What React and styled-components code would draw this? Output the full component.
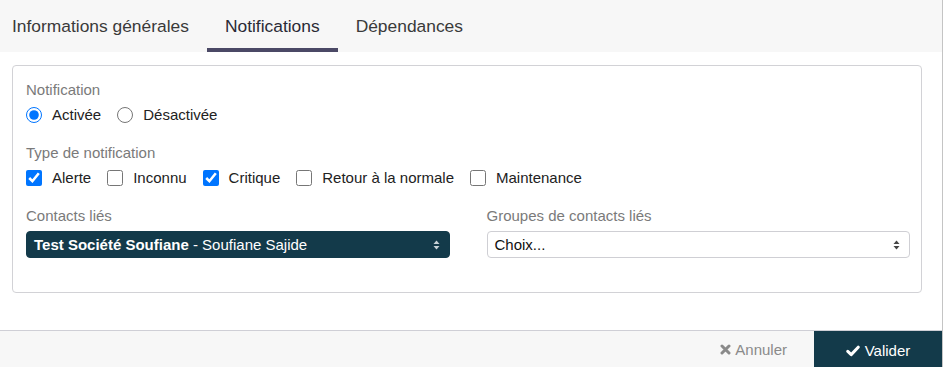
import React, { useState } from 'react';
import styled, { createGlobalStyle } from 'styled-components';

const GlobalStyle = createGlobalStyle`
  html, body {
    margin: 0;
    padding: 0;
    background: #ffffff;
  }
  body {
    font-family: "Liberation Sans", Arial, sans-serif;
    color: #222;
  }
  * {
    box-sizing: border-box;
  }
`;

const TYPES = [
  { key: 'alerte', label: 'Alerte' },
  { key: 'inconnu', label: 'Inconnu' },
  { key: 'critique', label: 'Critique' },
  { key: 'retour', label: 'Retour à la normale' },
  { key: 'maintenance', label: 'Maintenance' },
];

const SortArrows = ({ color }) => (
  <svg width="7" height="10" viewBox="0 0 7 10">
    <path d="M3.5 0.5 L6.5 4 L0.5 4 Z" fill={color} />
    <path d="M3.5 9.5 L6.5 6 L0.5 6 Z" fill={color} />
  </svg>
);

const App = () => {
  const [tab, setTab] = useState('notifications');
  const [active, setActive] = useState(true);
  const [types, setTypes] = useState({
    alerte: true,
    inconnu: false,
    critique: true,
    retour: false,
    maintenance: false,
  });

  const toggleType = (key) => {
    setTypes({ ...types, [key]: !types[key] });
  };

  return (
    <>
      <GlobalStyle />
      <Modal>
        <TabBar>
          <Tab active={tab === 'general'} onClick={() => setTab('general')}>
            Informations générales
          </Tab>
          <Tab active={tab === 'notifications'} onClick={() => setTab('notifications')}>
            Notifications
          </Tab>
          <Tab active={tab === 'deps'} onClick={() => setTab('deps')}>
            Dépendances
          </Tab>
        </TabBar>

        <Body>
          <Card>
            <Group>
              <GroupLabel>Notification</GroupLabel>
              <OptionRow>
                <Option>
                  <Radio
                    type="radio"
                    name="notif"
                    checked={active}
                    onChange={() => setActive(true)}
                  />
                  Activée
                </Option>
                <Option>
                  <Radio
                    type="radio"
                    name="notif"
                    checked={!active}
                    onChange={() => setActive(false)}
                  />
                  Désactivée
                </Option>
              </OptionRow>
            </Group>

            <Group>
              <GroupLabel>Type de notification</GroupLabel>
              <OptionRow>
                {TYPES.map((t) => (
                  <Option key={t.key}>
                    <Checkbox
                      type="checkbox"
                      checked={types[t.key]}
                      onChange={() => toggleType(t.key)}
                    />
                    {t.label}
                  </Option>
                ))}
              </OptionRow>
            </Group>

            <Columns>
              <Field>
                <GroupLabel>Contacts liés</GroupLabel>
                <SelectBox dark>
                  <span>
                    <strong>Test Société Soufiane</strong> - Soufiane Sajide
                  </span>
                  <SortArrows color="#c9d3d8" />
                </SelectBox>
              </Field>
              <Field>
                <GroupLabel>Groupes de contacts liés</GroupLabel>
                <SelectBox>
                  <span>Choix...</span>
                  <SortArrows color="#444" />
                </SelectBox>
              </Field>
            </Columns>
          </Card>
        </Body>

        <Footer>
          <CancelButton>
            <svg width="11" height="11" viewBox="0 0 11 11">
              <path
                d="M2 2 L9 9 M9 2 L2 9"
                stroke="#8a8a8a"
                strokeWidth="3"
                strokeLinecap="round"
              />
            </svg>
            Annuler
          </CancelButton>
          <SubmitButton>
            <svg width="14" height="12" viewBox="0 0 14 12">
              <path
                d="M1.8 6.4 L5.2 9.6 L12.2 2.2"
                stroke="#fff"
                strokeWidth="3"
                fill="none"
                strokeLinecap="round"
                strokeLinejoin="round"
              />
            </svg>
            Valider
          </SubmitButton>
        </Footer>
      </Modal>
    </>
  );
};

// Styled Components
const Modal = styled.div`
  width: 943px;
  height: 367px;
  display: flex;
  flex-direction: column;
  border-right: 1px solid #c4c4c4;
  background: #ffffff;
  overflow: hidden;
`;

const TabBar = styled.div`
  display: flex;
  height: 52px;
  background: #f7f7f7;
  flex-shrink: 0;
`;

const Tab = styled.div`
  display: flex;
  align-items: center;
  padding: 4px 18px 0;
  font-size: 17.4px;
  color: ${props => props.active ? '#2a2a35' : '#3a3a3a'};
  border-bottom: 4px solid ${props => props.active ? '#4b4966' : 'transparent'};
  cursor: pointer;

  &:first-child {
    padding-left: 12px;
  }
`;

const Body = styled.div`
  flex: 1;
  min-height: 0;
  padding: 13px 20px 0 12px;
`;

const Card = styled.div`
  border: 1px solid #d2d2d6;
  border-radius: 4px;
  padding: 14px 11px 34px 13px;
`;

const Group = styled.div`
  margin-bottom: 18px;
`;

const Field = styled.div``;

const GroupLabel = styled.div`
  font-size: 15px;
  line-height: 20px;
  color: #7a7a7a;
  margin-bottom: 5px;
`;

const OptionRow = styled.div`
  display: flex;
  align-items: center;
  gap: 16px;
`;

const Option = styled.label`
  display: flex;
  align-items: center;
  gap: 10px;
  font-size: 15px;
  line-height: 20px;
  color: #222;
  cursor: pointer;
`;

const Radio = styled.input`
  width: 16px;
  height: 16px;
  margin: 0;
  accent-color: #0075ff;
`;

const Checkbox = styled.input`
  width: 16px;
  height: 16px;
  margin: 0;
  accent-color: #0075ff;
`;

const Columns = styled.div`
  display: grid;
  grid-template-columns: 1fr 1fr;
  column-gap: 37px;
`;

const SelectBox = styled.div`
  display: flex;
  align-items: center;
  justify-content: space-between;
  height: 27px;
  padding: 0 9px 0 7px;
  border-radius: 4px;
  font-size: 15px;
  background: ${props => props.dark ? '#133a4a' : '#ffffff'};
  color: ${props => props.dark ? '#ffffff' : '#111'};
  border: 1px solid ${props => props.dark ? '#133a4a' : '#cfcfd4'};
  cursor: pointer;

  strong {
    font-weight: 700;
  }
`;

const Footer = styled.div`
  display: flex;
  justify-content: flex-end;
  height: 37px;
  flex-shrink: 0;
  background: #f7f7f7;
  border-top: 1px solid #cfcfd6;
`;

const CancelButton = styled.button`
  display: flex;
  align-items: center;
  gap: 4px;
  padding: 0 27px 0 26px;
  border: none;
  background: transparent;
  color: #8a8a8a;
  font-family: "Liberation Sans", Arial, sans-serif;
  font-size: 15px;
  cursor: pointer;
`;

const SubmitButton = styled.button`
  display: flex;
  align-items: center;
  justify-content: center;
  gap: 5px;
  width: 128px;
  border: none;
  background: #133a4a;
  color: #ffffff;
  font-family: "Liberation Sans", Arial, sans-serif;
  font-size: 15px;
  padding: 3px 0 0;
  cursor: pointer;
`;

export default App;
